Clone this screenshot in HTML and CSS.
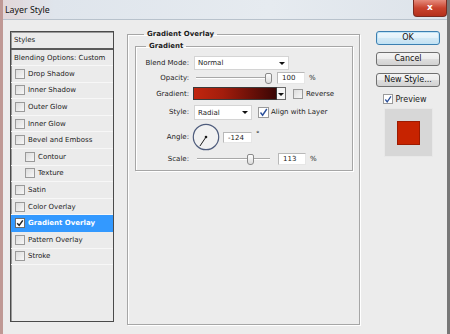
FILE: index.html
```html
<!DOCTYPE html>
<html lang="en">
<head>
    <meta charset="UTF-8">
    <title>Layer Style</title>
    <link rel="stylesheet" href="styles.css">
</head>
<body>

    <div class="window">
        <div class="titlebar">
            <span class="title">Layer Style</span>
            <span class="close">x</span>
        </div>

        <div class="client">
            <!-- Styles list -->
            <div class="styles-list">
                <div class="list-head">Styles</div>
                <div class="list-row blend">Blending Options: Custom</div>
                <div class="list-row"><span class="check"></span>Drop Shadow</div>
                <div class="list-row"><span class="check"></span>Inner Shadow</div>
                <div class="list-row"><span class="check"></span>Outer Glow</div>
                <div class="list-row"><span class="check"></span>Inner Glow</div>
                <div class="list-row"><span class="check"></span>Bevel and Emboss</div>
                <div class="list-row sub"><span class="check"></span>Contour</div>
                <div class="list-row sub"><span class="check"></span>Texture</div>
                <div class="list-row"><span class="check"></span>Satin</div>
                <div class="list-row"><span class="check"></span>Color Overlay</div>
                <div class="list-row selected">
                    <span class="check checked"><svg width="8" height="8" viewBox="0 0 8 8"><path d="M1.2 4.2 L3.2 6.4 L6.8 1.4" fill="none" stroke="#222" stroke-width="1.5"/></svg></span>Gradient Overlay
                </div>
                <div class="list-row"><span class="check"></span>Pattern Overlay</div>
                <div class="list-row"><span class="check"></span>Stroke</div>
            </div>

            <!-- Settings panel -->
            <fieldset class="panel">
                <legend>Gradient Overlay</legend>
                <fieldset class="group">
                    <legend>Gradient</legend>

                    <div class="field f-blend">
                        <label>Blend Mode:</label>
                        <div class="select blend-select">Normal<span class="arrow"></span></div>
                    </div>

                    <div class="field f-opacity">
                        <label>Opacity:</label>
                        <div class="slider"><span class="thumb" style="left: 95%"></span></div>
                        <div class="input">100</div>
                        <span class="unit">%</span>
                    </div>

                    <div class="field f-gradient">
                        <label>Gradient:</label>
                        <div class="swatch"></div>
                        <div class="swatch-btn"><span class="arrow"></span></div>
                        <span class="check reverse-check"></span>
                        <span class="check-label">Reverse</span>
                    </div>

                    <div class="field f-style">
                        <label>Style:</label>
                        <div class="select style-select">Radial<span class="arrow"></span></div>
                        <span class="check align-check"><svg width="9" height="9" viewBox="0 0 9 9"><path d="M1.5 4.5 L3.6 7.2 L7.8 1" fill="none" stroke="#2a4f9a" stroke-width="1.4"/></svg></span>
                        <span class="check-label">Align with Layer</span>
                    </div>

                    <div class="field f-angle">
                        <label>Angle:</label>
                        <svg class="dial" width="28" height="28" viewBox="0 0 28 28">
                            <circle cx="14" cy="14" r="12.7" fill="#f1f1f1" stroke="#4e5c7c" stroke-width="1.2"/>
                            <line x1="14" y1="14" x2="7.9" y2="23.1" stroke="#1a1a1a" stroke-width="1"/>
                            <circle cx="14" cy="14" r="1.3" fill="#1a1a1a"/>
                        </svg>
                        <div class="input angle-input">-124</div>
                        <span class="degree">°</span>
                    </div>

                    <div class="field f-scale">
                        <label>Scale:</label>
                        <div class="slider scale-slider"><span class="thumb" style="left: 73%"></span></div>
                        <div class="input">113</div>
                        <span class="unit">%</span>
                    </div>
                </fieldset>
            </fieldset>

            <!-- Buttons and preview -->
            <div class="side">
                <button class="btn default">OK</button>
                <button class="btn">Cancel</button>
                <button class="btn">New Style...</button>
                <div class="preview-row">
                    <span class="check"><svg width="9" height="9" viewBox="0 0 9 9"><path d="M1.5 4.5 L3.6 7.2 L7.8 1" fill="none" stroke="#2a4f9a" stroke-width="1.4"/></svg></span>
                    <span>Preview</span>
                </div>
                <div class="preview-box">
                    <div class="preview-square"></div>
                </div>
            </div>
        </div>
    </div>

</body>
</html>
```

FILE: styles.css
```css
/* General */
body {
    margin: 0;
    font-family: 'DejaVu Sans', sans-serif;
    font-size: 7px;
    color: #1c1c1c;
    background: #ececec;
}

.window {
    width: 450px;
    height: 334px;
    box-sizing: border-box;
    border-left: 3px solid #bf9894;
    border-right: 3px solid #777;
    background: #ececec;
    overflow: hidden;
}

/* Title bar */
.titlebar {
    height: 19px;
    display: flex;
    align-items: center;
    justify-content: space-between;
    margin: 0 -3px;
    padding-left: 5px;
    background: linear-gradient(90deg, #e2d6d8 0, #dfe5ec 12%, #e6ebf0 60%, #dde3ea 100%);
    border-bottom: 1px solid #b8c2cc;
}

.title {
    font-family: 'Noto Sans', sans-serif;
    font-size: 8.8px;
    color: #111;
}

.close {
    align-self: flex-start;
    width: 32px;
    height: 16px;
    margin-right: 3px;
    border: 1px solid #7a2a20;
    border-top: none;
    border-radius: 0 0 4px 4px;
    background: linear-gradient(#e58b7c, #c9432e 50%, #b4301c);
    color: #fff;
    font-family: 'DejaVu Sans', sans-serif;
    font-weight: bold;
    font-size: 9px;
    line-height: 14px;
    text-align: center;
}

/* Client area */
.client {
    display: flex;
    align-items: flex-start;
    padding: 9px 0 0 7px;
}

/* Styles list */
.styles-list {
    width: 104px;
    height: 291px;
    margin-top: 2px;
    box-sizing: border-box;
    border: 1px solid #4a4a4a;
    box-shadow: inset 1px 1px 0 #9a9a9a;
    background: #ebebeb;
}

.list-head {
    height: 16px;
    line-height: 16px;
    padding-left: 3px;
    border-bottom: 2px solid #5a5a5a;
}

.list-row {
    height: 16.6px;
    box-sizing: border-box;
    display: flex;
    align-items: center;
    padding-left: 4px;
    border-bottom: 1px solid #f7f7f7;
}

.list-row.blend {
    height: 16px;
    padding-left: 3px;
}

.list-row.sub {
    padding-left: 14px;
}

.list-row.selected {
    background: #3399ff;
    color: #fff;
    font-weight: bold;
    border-bottom-color: #3399ff;
}

/* Checkboxes */
.check {
    width: 8px;
    height: 8px;
    flex: none;
    margin-right: 3px;
    border: 1px solid #9a9a9a;
    background: linear-gradient(135deg, #dcdcdc, #f7f7f7);
    display: flex;
    align-items: center;
    justify-content: center;
}

.check svg {
    display: block;
}

.check.checked {
    background: #fff;
    border-color: #6c6c6c;
}

.check-label {
    white-space: nowrap;
}

/* Panel */
.panel {
    width: 233px;
    height: 296px;
    box-sizing: border-box;
    margin: 0 0 0 13px;
    padding: 1px 6px 0 7px;
    border: 1px solid #a6a6a6;
    box-shadow: 1px 1px 0 #fff, inset 1px 1px 0 #fff;
}

.panel legend,
.group legend {
    font-weight: bold;
    line-height: 11px;
    padding: 0 3px;
}

.panel legend {
    margin-left: 9px;
}

.group {
    height: 130px;
    box-sizing: border-box;
    margin: 0;
    padding: 3px 0 0 0;
    border: 1px solid #a6a6a6;
    box-shadow: 1px 1px 0 #fff, inset 1px 1px 0 #fff;
}

.group legend {
    margin-left: 10px;
}

/* Form rows */
.field {
    display: flex;
    align-items: center;
    white-space: nowrap;
}

.field label {
    width: 53px;
    text-align: right;
    flex: none;
}

.f-blend { height: 15px; }
.f-opacity { height: 15px; }
.f-gradient { height: 17px; }
.f-style { height: 20px; }
.f-angle { height: 30px; }
.f-scale { height: 13px; }

.select {
    position: relative;
    height: 14px;
    box-sizing: border-box;
    margin-left: 5px;
    padding-left: 3px;
    line-height: 13px;
    background: #fff;
    border: 1px solid #d4d4d4;
}

.blend-select { width: 95px; }
.style-select { width: 58px; height: 15px; line-height: 14px; }

.arrow {
    position: absolute;
    right: 3px;
    top: 5px;
    width: 0;
    height: 0;
    border-left: 3px solid transparent;
    border-right: 3px solid transparent;
    border-top: 3px solid #111;
}

/* Sliders */
.slider {
    position: relative;
    width: 76px;
    height: 2px;
    margin-left: 7px;
    border-top: 1px solid #a8a8a8;
    border-bottom: 1px solid #fff;
    box-sizing: border-box;
}

.scale-slider {
    width: 73px;
    margin-left: 8px;
    margin-right: 3px;
}

.thumb {
    position: absolute;
    top: -5px;
    width: 5px;
    height: 9px;
    margin-left: -3px;
    border: 1px solid #8a8a8a;
    border-radius: 2px 2px 3px 3px;
    background: linear-gradient(#fdfdfd, #dcdcdc);
}

.input {
    width: 28px;
    height: 12px;
    box-sizing: border-box;
    margin-left: 5px;
    padding-left: 4px;
    line-height: 11px;
    background: #fff;
    border: 1px solid;
    border-color: #b8b8b8 #e6e6e6 #e6e6e6 #b8b8b8;
}

.unit {
    margin-left: 4px;
}

/* Gradient swatch */
.swatch {
    width: 84px;
    height: 13px;
    box-sizing: border-box;
    margin-left: 4px;
    border: 1px solid #3a3a3a;
    background: linear-gradient(90deg, #c1260f 0, #a31d0c 35%, #6b1008 70%, #3a0605 100%);
}

.swatch-btn {
    position: relative;
    width: 9px;
    height: 13px;
    box-sizing: border-box;
    border: 1px solid #6a6a6a;
    border-left: none;
    background: #f4f4f4;
}

.swatch-btn .arrow {
    right: 1px;
}

.reverse-check {
    margin-left: 7px;
    margin-right: 3px;
}

.align-check {
    width: 9px;
    height: 9px;
    margin-left: 6px;
    margin-right: 2px;
    background: #fff;
}

/* Angle */
.dial {
    display: block;
    margin-left: 3px;
}

.angle-input {
    width: 29px;
    height: 11px;
    margin-left: 3px;
    line-height: 10px;
}

.degree {
    margin-left: 4px;
    margin-top: -6px;
}

/* Side column */
.side {
    width: 64px;
    margin: 2px 0 0 16px;
    display: flex;
    flex-direction: column;
    align-items: center;
}

.btn {
    width: 64px;
    height: 14px;
    padding: 0;
    margin-bottom: 7px;
    font-family: 'DejaVu Sans', sans-serif;
    font-size: 8px;
    line-height: 12px;
    color: #111;
    border: 1px solid #707070;
    border-radius: 3px;
    background: linear-gradient(#f4f4f4 0, #ececec 50%, #dedede 51%, #d2d2d2 100%);
}

.btn.default {
    border-color: #3c7fb1;
    box-shadow: inset 0 0 0 1px #bfe3f6;
    background: linear-gradient(#eef7fc 0, #e2f1fa 50%, #d2e9f6 51%, #c4e0f1 100%);
}

.preview-row {
    display: flex;
    align-items: center;
    height: 10px;
    font-size: 8px;
    margin-right: 6px;
}

.preview-row .check {
    width: 8px;
    height: 8px;
    margin-right: 2px;
    background: #fff;
}

.preview-box {
    width: 49px;
    height: 49px;
    margin-top: 4px;
    box-sizing: border-box;
    border: 1px solid #e8e8e8;
    background: #d7d7d7;
    display: flex;
    align-items: center;
    justify-content: center;
}

.preview-square {
    width: 23px;
    height: 24px;
    box-sizing: border-box;
    border: 1px solid #9c1a00;
    background: #c72300;
}
```
